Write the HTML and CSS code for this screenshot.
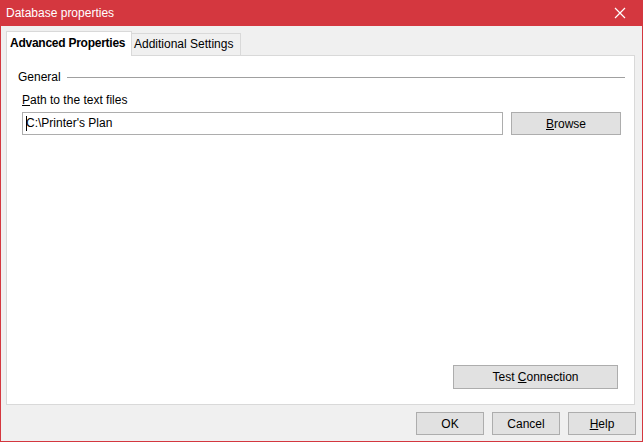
FILE: index.html
```html
<!DOCTYPE html>
<html>
<head>
<meta charset="utf-8">
<link rel="stylesheet" href="styles.css">
</head>
<body>
<div class="window">
  <div class="titlebar">
    <span class="title">Database properties</span>
    <svg class="close" width="12" height="12" viewBox="0 0 12 12"><path d="M1 1 L11 11 M11 1 L1 11" stroke="#fff" stroke-width="1.2" fill="none"/></svg>
  </div>
  <div class="content">
    <div class="tabs">
      <div class="tab active">Advanced Properties</div>
      <div class="tab">Additional Settings</div>
    </div>
    <div class="panel">
      <div class="group">
        <span class="group-label">General</span>
        <span class="group-line"></span>
      </div>
      <div class="field-label"><u>P</u>ath to the text files</div>
      <div class="path-row">
        <div class="input"><span class="caret"></span><span>C:\Printer's Plan</span></div>
        <div class="btn browse"><span><u>B</u>rowse</span></div>
      </div>
      <div class="spacer"></div>
      <div class="test-row">
        <div class="btn test"><span>Test <u>C</u>onnection</span></div>
      </div>
    </div>
    <div class="footer">
      <div class="btn small"><span>OK</span></div>
      <div class="btn small"><span>Cancel</span></div>
      <div class="btn small"><span><u>H</u>elp</span></div>
    </div>
  </div>
</div>
</body>
</html>
```
FILE: styles.css
```css
* { box-sizing: border-box; }
html, body { margin: 0; padding: 0; }
body {
  font-family: "Liberation Sans", Arial, sans-serif;
  font-size: 12px;
  color: #000;
  background: #fff;
}
.window {
  width: 643px;
  height: 442px;
  background: #f0f0f0;
  border: 1px solid #d4373f;
  border-top: none;
  display: flex;
  flex-direction: column;
}
.titlebar {
  height: 26px;
  margin: 0 -1px;
  background: #d4373f;
  color: #fff;
  display: flex;
  align-items: center;
  justify-content: space-between;
  padding: 0 17px 0 6px;
}
.title { line-height: 16px; }
.close { display: block; }
.content {
  flex: 1;
  display: flex;
  flex-direction: column;
  padding: 5px 6px 6px 5px;
}
.tabs {
  display: flex;
  align-items: flex-end;
  height: 24px;
  position: relative;
  z-index: 1;
}
.tab {
  width: 109px;
  height: 22px;
  padding: 0 0 0 2px;
  border: 1px solid #d9d9d9;
  border-bottom: none;
  border-left: none;
  background: #f0f0f0;
  line-height: 20px;
  white-space: nowrap;
  overflow: hidden;
}
.tab.active {
  width: 126px;
  height: 25px;
  margin-bottom: -1px;
  background: #fff;
  font-weight: bold;
  letter-spacing: -0.25px;
  border-left: 1px solid #d9d9d9;
  padding: 0 0 0 3px;
  line-height: 22px;
}
.panel {
  width: 629px;
  height: 350px;
  background: #fff;
  border: 1px solid #d9d9d9;
  display: flex;
  flex-direction: column;
  padding: 13px 13px 14px 15px;
}
.group {
  display: flex;
  align-items: center;
  margin-left: -4px;
  height: 16px;
}
.group-label { line-height: 16px; }
.group-line {
  flex: 1;
  height: 1px;
  background: #a0a0a0;
  margin-left: 6px;
  margin-right: -4px;
}
.field-label {
  margin-top: 7px;
  line-height: 16px;
}
.path-row {
  display: flex;
  align-items: center;
  gap: 8px;
  margin-top: 4px;
}
.input {
  width: 481px;
  height: 23px;
  border: 1px solid #adadad;
  background: #fff;
  padding: 0 3px;
  line-height: 21px;
  display: flex;
  align-items: center;
}
.caret {
  width: 1px;
  height: 15px;
  background: #000;
  margin-right: -1px;
}
.btn {
  height: 23px;
  border: 1px solid #adadad;
  background: #e1e1e1;
  display: flex;
  align-items: center;
  justify-content: center;
  white-space: nowrap;
}
.browse { width: 110px; }
.spacer { flex: 1; }
.test-row {
  display: flex;
  justify-content: flex-end;
}
.test { width: 165px; height: 24px; margin-right: 3px; margin-bottom: 1px; }
.footer {
  display: flex;
  justify-content: flex-end;
  gap: 8px;
  margin-top: 7px;
}
.small { width: 68px; }
u { text-decoration: underline; text-underline-offset: 1px; }
```
